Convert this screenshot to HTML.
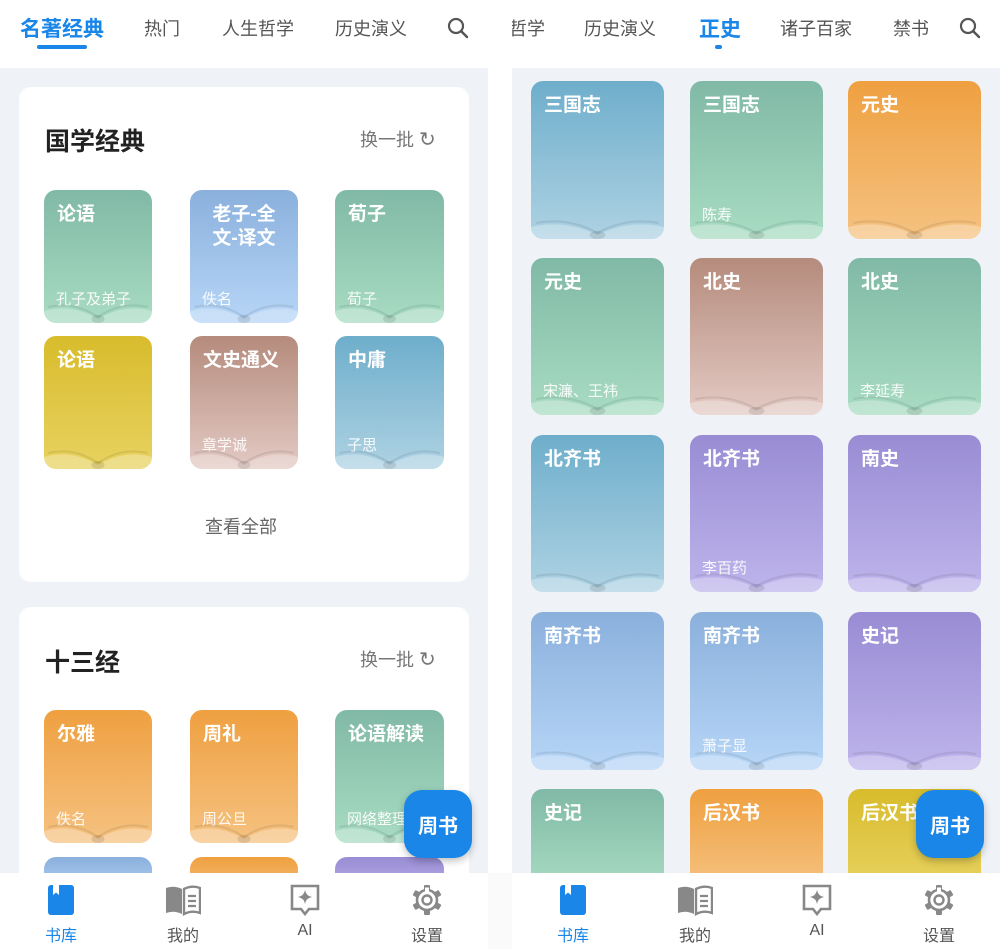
<!DOCTYPE html>
<html><head><meta charset="utf-8"><style>
*{margin:0;padding:0;box-sizing:border-box}
body{width:1000px;height:949px;position:relative;overflow:hidden;background:#fff;font-family:"Liberation Sans","Noto Sans CJK SC",sans-serif}
.abs{position:absolute}
.tab{position:absolute;top:15px;font-size:18px;color:#555;white-space:nowrap}
.act{color:#1a86e8;font-weight:bold;font-size:21px;top:13px}
.bg{position:absolute;background:#eff2f7}
.card{position:absolute;background:#fff;border-radius:12px}
.cv{position:absolute;border-radius:12px;overflow:hidden;color:#fff}
.cv .t{position:absolute;left:13px;top:13px;font-size:19px;font-weight:bold;line-height:24px;right:6px}
.cv .a{position:absolute;left:12px;bottom:14px;font-size:15px;opacity:.92;white-space:nowrap}
.cv svg{position:absolute;left:0;bottom:0;width:100%;height:34px}
.g{background:linear-gradient(#80b9a6,#a8dcc2)}
.b{background:linear-gradient(#8ab0dc,#b7d6f7)}
.y{background:linear-gradient(#d8bc2c,#e8d260)}
.br{background:linear-gradient(#b58b7c,#e3cac4)}
.tl{background:linear-gradient(#6eaecb,#aed2e3)}
.o{background:linear-gradient(#efa040,#f5c281)}
.p{background:linear-gradient(#998cd4,#beb4eb)}
.fab{position:absolute;width:68px;height:68px;border-radius:18px;background:#1a86e8;color:#fff;font-size:20px;font-weight:bold;display:flex;align-items:center;justify-content:center;box-shadow:0 3px 8px rgba(0,0,0,.25)}
.nav{position:absolute;top:873px;height:76px;background:#fff}
.ni{position:absolute;top:884px;width:60px;text-align:center}
.ni .l{position:absolute;top:38px;left:0;width:60px;font-size:16px;color:#555}
.ni svg{display:block;margin:0 auto}
.h2{position:absolute;font-size:25px;font-weight:bold;color:#222}
.sw{position:absolute;font-size:18px;color:#777}
</style></head><body>
<div class="tab act" style="left:20px">名著经典</div>
<div class="abs" style="left:37px;top:45px;width:50px;height:4px;background:#1a86e8;border-radius:2px"></div>
<div class="tab" style="left:144px">热门</div>
<div class="tab" style="left:222px">人生哲学</div>
<div class="tab" style="left:335px">历史演义</div>
<svg class="abs" style="left:446px;top:16px" width="24" height="24" viewBox="0 0 24 24"><circle cx="10" cy="10" r="7" fill="none" stroke="#555" stroke-width="2.2"/><path d="M15 15l6 6" stroke="#555" stroke-width="2.4" stroke-linecap="round"/></svg>
<div class="abs" style="left:512px;top:0;width:40px;height:60px;overflow:hidden"><div class="tab" style="left:-3px">哲学</div></div>
<div class="tab" style="left:584px">历史演义</div>
<div class="tab act" style="left:699px">正史</div>
<div class="abs" style="left:715px;top:45px;width:7px;height:4px;background:#1a86e8;border-radius:2px"></div>
<div class="tab" style="left:780px">诸子百家</div>
<div class="tab" style="left:893px">禁书</div>
<svg class="abs" style="left:958px;top:16px" width="24" height="24" viewBox="0 0 24 24"><circle cx="10" cy="10" r="7" fill="none" stroke="#555" stroke-width="2.2"/><path d="M15 15l6 6" stroke="#555" stroke-width="2.4" stroke-linecap="round"/></svg>

<div class="bg" style="left:0;top:68px;width:488px;height:805px"></div>
<div class="bg" style="left:512px;top:68px;width:488px;height:805px"></div>

<div class="card" style="left:19px;top:87px;width:450px;height:495px"></div>
<div class="h2" style="left:45px;top:122px">国学经典</div>
<div class="sw" style="left:360px;top:126px">换一批 <span style="font-size:20px">↻</span></div>
<div class="abs" style="left:205px;top:513px;font-size:18px;color:#666">查看全部</div>
<div class="card" style="left:19px;top:607px;width:450px;height:300px"></div>
<div class="h2" style="left:45px;top:643px">十三经</div>
<div class="sw" style="left:360px;top:646px">换一批 <span style="font-size:20px">↻</span></div>

<svg width="0" height="0" style="position:absolute"><defs><symbol id="bk" viewBox="0 0 100 34" preserveAspectRatio="none"><path d="M0 22 Q25 14 50 30 Q75 14 100 22 L100 34 L0 34Z" fill="rgba(255,255,255,.28)"/><path d="M4 18 Q28 12 50 28 Q72 12 96 18" fill="none" stroke="rgba(0,0,0,.08)" stroke-width="2"/><ellipse cx="50" cy="30" rx="6" ry="4" fill="rgba(0,0,0,.1)"/></symbol>
<symbol id="gear" viewBox="0 0 32 32"><g fill="#888"><rect x="13" y="1" width="6" height="6" rx="1"/><rect x="13" y="25" width="6" height="6" rx="1"/><rect x="13" y="1" width="6" height="6" rx="1" transform="rotate(60 16 16)"/><rect x="13" y="1" width="6" height="6" rx="1" transform="rotate(120 16 16)"/><rect x="13" y="1" width="6" height="6" rx="1" transform="rotate(240 16 16)"/><rect x="13" y="1" width="6" height="6" rx="1" transform="rotate(300 16 16)"/></g><circle cx="16" cy="16" r="10" fill="#fff" stroke="#888" stroke-width="2.6"/><rect x="14" y="3.5" width="4" height="4" fill="#fff"/><circle cx="16" cy="16" r="4.5" fill="none" stroke="#888" stroke-width="2.4"/></symbol></defs></svg>

<div class="cv g" style="left:44px;top:190px;width:108px;height:133px"><div class="t">论语</div><div class="a">孔子及弟子</div><svg><use href="#bk"/></svg></div>
<div class="cv b" style="left:190px;top:190px;width:108px;height:133px"><div class="t" style="text-align:center;left:6px">老子-全<br>文-译文</div><div class="a">佚名</div><svg><use href="#bk"/></svg></div>
<div class="cv g" style="left:335px;top:190px;width:109px;height:133px"><div class="t">荀子</div><div class="a">荀子</div><svg><use href="#bk"/></svg></div>
<div class="cv y" style="left:44px;top:336px;width:108px;height:133px"><div class="t">论语</div><svg><use href="#bk"/></svg></div>
<div class="cv br" style="left:190px;top:336px;width:108px;height:133px"><div class="t">文史通义</div><div class="a">章学诚</div><svg><use href="#bk"/></svg></div>
<div class="cv tl" style="left:335px;top:336px;width:109px;height:133px"><div class="t">中庸</div><div class="a">子思</div><svg><use href="#bk"/></svg></div>
<div class="cv o" style="left:44px;top:710px;width:108px;height:133px"><div class="t">尔雅</div><div class="a">佚名</div><svg><use href="#bk"/></svg></div>
<div class="cv o" style="left:190px;top:710px;width:108px;height:133px"><div class="t">周礼</div><div class="a">周公旦</div><svg><use href="#bk"/></svg></div>
<div class="cv g" style="left:335px;top:710px;width:109px;height:133px"><div class="t">论语解读</div><div class="a">网络整理</div><svg><use href="#bk"/></svg></div>
<div class="cv b" style="left:44px;top:857px;width:108px;height:40px"></div>
<div class="cv o" style="left:190px;top:857px;width:108px;height:40px"></div>
<div class="cv p" style="left:335px;top:857px;width:109px;height:40px"></div>

<div class="cv tl" style="left:531px;top:81px;width:133px;height:158px"><div class="t">三国志</div><svg><use href="#bk"/></svg></div>
<div class="cv g" style="left:690px;top:81px;width:133px;height:158px"><div class="t">三国志</div><div class="a">陈寿</div><svg><use href="#bk"/></svg></div>
<div class="cv o" style="left:848px;top:81px;width:133px;height:158px"><div class="t">元史</div><svg><use href="#bk"/></svg></div>
<div class="cv g" style="left:531px;top:258px;width:133px;height:157px"><div class="t">元史</div><div class="a">宋濂、王祎</div><svg><use href="#bk"/></svg></div>
<div class="cv br" style="left:690px;top:258px;width:133px;height:157px"><div class="t">北史</div><svg><use href="#bk"/></svg></div>
<div class="cv g" style="left:848px;top:258px;width:133px;height:157px"><div class="t">北史</div><div class="a">李延寿</div><svg><use href="#bk"/></svg></div>
<div class="cv tl" style="left:531px;top:435px;width:133px;height:157px"><div class="t">北齐书</div><svg><use href="#bk"/></svg></div>
<div class="cv p" style="left:690px;top:435px;width:133px;height:157px"><div class="t">北齐书</div><div class="a">李百药</div><svg><use href="#bk"/></svg></div>
<div class="cv p" style="left:848px;top:435px;width:133px;height:157px"><div class="t">南史</div><svg><use href="#bk"/></svg></div>
<div class="cv b" style="left:531px;top:612px;width:133px;height:158px"><div class="t">南齐书</div><svg><use href="#bk"/></svg></div>
<div class="cv b" style="left:690px;top:612px;width:133px;height:158px"><div class="t">南齐书</div><div class="a">萧子显</div><svg><use href="#bk"/></svg></div>
<div class="cv p" style="left:848px;top:612px;width:133px;height:158px"><div class="t">史记</div><svg><use href="#bk"/></svg></div>
<div class="cv g" style="left:531px;top:789px;width:133px;height:100px"><div class="t">史记</div></div>
<div class="cv o" style="left:690px;top:789px;width:133px;height:100px"><div class="t">后汉书</div></div>
<div class="cv y" style="left:848px;top:789px;width:133px;height:100px"><div class="t">后汉书</div></div>

<div class="fab" style="left:404px;top:790px">周书</div>
<div class="fab" style="left:916px;top:790px">周书</div>

<div class="nav" style="left:0;width:488px"></div>
<div class="nav" style="left:512px;width:488px"></div>
<div class="nav" style="left:488px;width:24px;background:#fafafa"></div>

<div class="ni" style="left:31px"><svg width="28" height="32" viewBox="0 0 28 32"><rect x="1" y="1" width="26" height="30" rx="3" fill="#1a86e8"/><path d="M6 1h6v10l-3-2.5-3 2.5z" fill="#fff"/></svg><div class="l" style="color:#1a86e8">书库</div></div>
<div class="ni" style="left:153px"><svg width="36" height="32" viewBox="0 0 36 32"><path d="M1 4q8-3 16 1v25q-8-4-16-1z" fill="#888"/><path d="M19 5q8-4 16-1v25q-8-3-16 1z" fill="none" stroke="#888" stroke-width="2.4"/><path d="M23 12h8M23 17h8M23 22h8" stroke="#888" stroke-width="2.2"/></svg><div class="l">我的</div></div>
<div class="ni" style="left:275px"><svg width="30" height="32" viewBox="0 0 30 32"><path d="M2 2h26v23h-9l-4 5-4-5h-9z" fill="none" stroke="#888" stroke-width="2.6"/><path d="M15 6q1 6 7 7q-6 1-7 7q-1-6-7-7q6-1 7-7z" fill="#888"/></svg><div class="l">AI</div></div>
<div class="ni" style="left:397px"><svg width="32" height="32"><use href="#gear"/></svg><div class="l">设置</div></div>

<div class="ni" style="left:543px"><svg width="28" height="32" viewBox="0 0 28 32"><rect x="1" y="1" width="26" height="30" rx="3" fill="#1a86e8"/><path d="M6 1h6v10l-3-2.5-3 2.5z" fill="#fff"/></svg><div class="l" style="color:#1a86e8">书库</div></div>
<div class="ni" style="left:665px"><svg width="36" height="32" viewBox="0 0 36 32"><path d="M1 4q8-3 16 1v25q-8-4-16-1z" fill="#888"/><path d="M19 5q8-4 16-1v25q-8-3-16 1z" fill="none" stroke="#888" stroke-width="2.4"/><path d="M23 12h8M23 17h8M23 22h8" stroke="#888" stroke-width="2.2"/></svg><div class="l">我的</div></div>
<div class="ni" style="left:787px"><svg width="30" height="32" viewBox="0 0 30 32"><path d="M2 2h26v23h-9l-4 5-4-5h-9z" fill="none" stroke="#888" stroke-width="2.6"/><path d="M15 6q1 6 7 7q-6 1-7 7q-1-6-7-7q6-1 7-7z" fill="#888"/></svg><div class="l">AI</div></div>
<div class="ni" style="left:909px"><svg width="32" height="32"><use href="#gear"/></svg><div class="l">设置</div></div>
</body></html>
